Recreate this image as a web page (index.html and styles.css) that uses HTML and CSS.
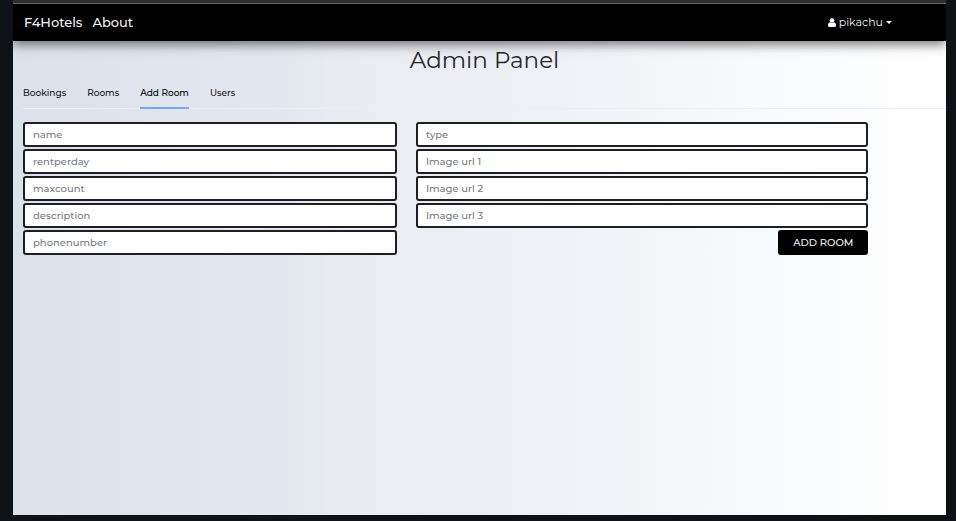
FILE: index.html
```html
<!DOCTYPE html>
<html lang="en">
<head>
<meta charset="utf-8">
<title>F4Hotels - Admin Panel</title>
<link rel="stylesheet" href="styles.css">
</head>
<body>
<div class="app">
  <header class="navbar">
    <nav class="nav-links">
      <a href="#">F4Hotels</a>
      <a href="#">About</a>
    </nav>
    <button class="user-menu" type="button">
      <svg class="user-icon" viewBox="0 0 16 18" aria-hidden="true"><circle cx="8" cy="5" r="4.5"/><path d="M4 8.5C1.5 8.8 0 11 0 14.5C0 16.7 1.2 18 3 18H13C14.8 18 16 16.7 16 14.5C16 11 14.5 8.8 12 8.5C9.8 10.8 6.2 10.8 4 8.5Z"/></svg>
      <span>pikachu</span>
      <span class="caret"></span>
    </button>
  </header>
  <main class="panel">
    <h1>Admin Panel</h1>
    <nav class="tabs">
      <button type="button">Bookings</button>
      <button type="button">Rooms</button>
      <button type="button" class="active">Add Room</button>
      <button type="button">Users</button>
    </nav>
    <form class="room-form">
      <div class="column">
        <input type="text" placeholder="name" aria-label="name">
        <input type="text" placeholder="rentperday" aria-label="rentperday">
        <input type="text" placeholder="maxcount" aria-label="maxcount">
        <input type="text" placeholder="description" aria-label="description">
        <input type="text" placeholder="phonenumber" aria-label="phonenumber">
      </div>
      <div class="column">
        <input type="text" placeholder="type" aria-label="type">
        <input type="text" placeholder="Image url 1" aria-label="Image url 1">
        <input type="text" placeholder="Image url 2" aria-label="Image url 2">
        <input type="text" placeholder="Image url 3" aria-label="Image url 3">
        <button class="submit" type="button">ADD ROOM</button>
      </div>
    </form>
  </main>
</div>
</body>
</html>
```
FILE: styles.css
```css
* {
  box-sizing: border-box;
}

body {
  margin: 0;
  background: #0e1116;
  font-family: Montserrat, Inter, sans-serif;
  font-weight: 500;
}

button,
input {
  font-family: inherit;
  font-weight: inherit;
}

.app {
  display: flex;
  flex-direction: column;
  min-height: calc(100vh - 6px);
  margin: 0 10px 6px 13px;
  overflow: hidden;
  background: linear-gradient(to right, #dae2ea, #dfe3ec 10%, #e3e8f0 30%, #e8ebf0 34%, #eeeff4 52%, #f4f6fa 70%, #ffffff 98%);
}

.navbar {
  display: flex;
  justify-content: space-between;
  align-items: center;
  height: 41px;
  padding: 3px 54px 0 11px;
  background: linear-gradient(#2e2e2e 3px, #626262 3px, #626262 4px, #000000 4px);
  box-shadow: 0 4px 10px rgba(0, 0, 0, 0.5);
}

.nav-links {
  display: flex;
  gap: 10px;
}

.nav-links a {
  color: #f4f4f4;
  font-size: 13px;
  line-height: 20px;
  text-decoration: none;
}

.user-menu {
  display: flex;
  align-items: center;
  gap: 3px;
  padding: 0;
  border: 0;
  background: none;
  color: #f4f4f4;
  font-size: 11px;
  font-weight: 400;
  line-height: 16px;
}

.user-icon {
  width: 8px;
  height: 9px;
  fill: #ffffff;
}

.caret {
  border: 3px solid transparent;
  border-top-color: #ffffff;
  border-bottom: 0;
}

.panel {
  margin-right: -10px;
}

h1 {
  margin: 3px 0 11px;
  color: #24272b;
  font-size: 23px;
  font-weight: 400;
  line-height: 32px;
  text-align: center;
}

.tabs {
  display: flex;
  gap: 21px;
  margin: 0 10px;
  border-bottom: 1px solid #eceef2;
}

.tabs button {
  height: 22px;
  margin-bottom: -1px;
  padding: 0 0 8px;
  border: 0;
  border-bottom: 2px solid transparent;
  background: none;
  color: #16181b;
  font-size: 9px;
  line-height: 12px;
}

.tabs .active {
  border-bottom-color: #7ba7ee;
  color: #000000;
}

.room-form {
  display: grid;
  grid-template-columns: 5fr 6fr 1fr;
  margin-top: 13px;
}

.column {
  display: flex;
  flex-direction: column;
  gap: 2px;
  padding: 0 9px 0 10px;
}

.column input {
  width: 100%;
  height: 25px;
  padding: 0 8px;
  border: 2px solid #1d1f24;
  border-radius: 3px;
  background: #ffffff;
  color: #24272b;
  font-size: 10px;
}

.column input::placeholder {
  color: #777c82;
  opacity: 1;
}

.submit {
  align-self: flex-end;
  height: 25px;
  padding: 0 15px;
  border: 0;
  border-radius: 3px;
  background: #000000;
  color: #f2f2f2;
  font-size: 10px;
}
```
